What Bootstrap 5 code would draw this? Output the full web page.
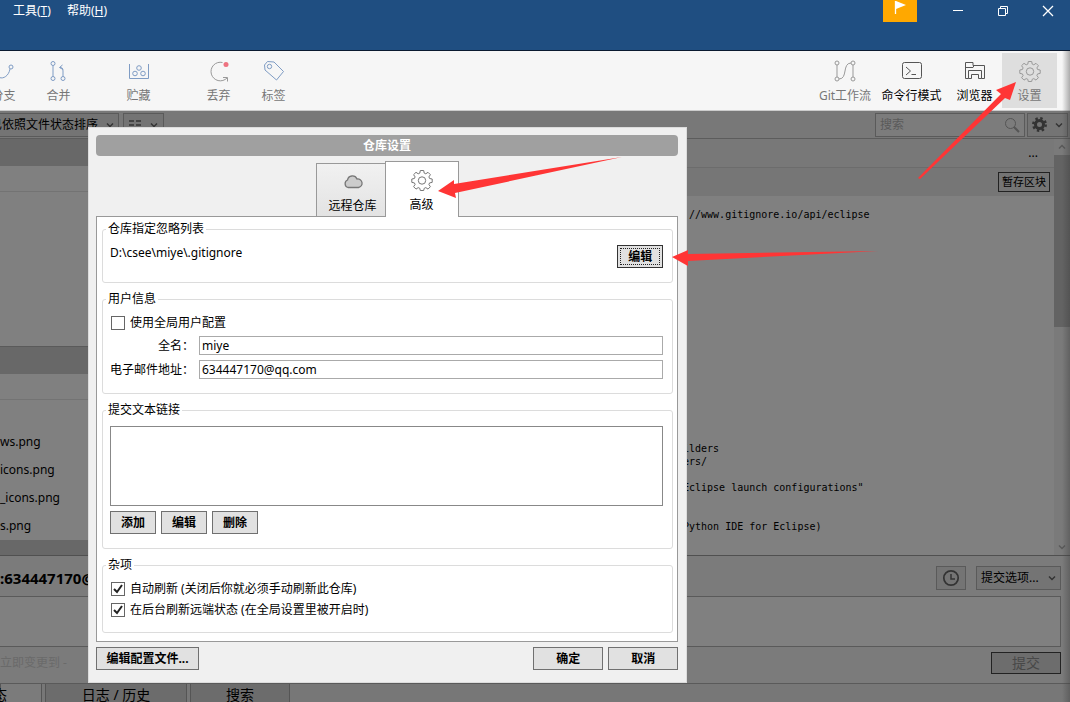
<!DOCTYPE html>
<html lang="zh-CN">
<head>
<meta charset="utf-8">
<meta name="viewport" content="width=device-width, initial-scale=1">
<title>仓库设置</title>
<link rel="stylesheet" href="https://cdn.jsdelivr.net/npm/bootstrap@5.3.0/dist/css/bootstrap.min.css">
<style>
  body { font: 12px/16px "Noto Sans", "Noto Sans CJK SC", sans-serif; color: #000; background: #7b7b7b; }
  svg { fill: none; stroke: currentColor; display: block; flex: none; }
  button, input, textarea { font: inherit; color: inherit; }
  .stage { min-height: 100vh; overflow: hidden; }
  .plain { background: none; border: 0; padding: 0; }

  .titlebar { background: #1f4e81; height: 51px; border-bottom: 1px solid #0a1a30; color: #fff; }
  .titlebar nav { padding: 3px 0 0 13px; gap: 16px; }
  .titlebar a { color: #fff; }
  .flag-btn { width: 34px; height: 22px; background: #ffa800; color: #fff; margin-right: 18px; }
  .win-btn { width: 45px; height: 22px; color: #fff; }

  .toolstrip { background: #f6f6f6; height: 60px; border-bottom: 1px solid #ccc; padding-top: 2px; color: #777; }
  .tools-left { margin-left: -24px; }
  .tools-right { margin-right: 13px; }
  .tool { width: 55px; height: 55px; padding-top: 7px; gap: 6px; color: #777; white-space: nowrap; }
  .tool svg { color: #7f9cc4; }
  .tool.grey svg, .tool.dark svg { color: #999; }
  .tool.dark { color: #000; }
  .tool.dark svg { color: #555; }
  .tool.wide { width: 71px; }
  .tool.mid { width: 62px; }
  .tool.pressed { background: #dedede; }
  .gap-group { margin-left: 25px; }

  .optbar { background: #787878; height: 28px; border-bottom: 1px solid #5c5c5c; padding-right: 2px; }
  .dim-btn { background: #747474; border: 1px solid #5a5a5a; padding: 0; height: 24px; color: #000; white-space: nowrap; overflow: hidden; }
  .dim-btn svg { color: #333; }
  .sort-btn { width: 119px; border-left: 0; }
  .view-btn { width: 41px; }
  .search-box { width: 150px; height: 24px; border: 1px solid #5a5a5a; background: #7c7c7c; color: #555; padding: 0 4px; margin-right: 2px; }
  .search-box input { background: none; border: 0; padding: 0; outline: 0; min-width: 0; }
  .search-box input::placeholder { color: #5a5a5a; opacity: 1; }

  .workarea { height: 416px; }
  .left-pane { width: 340px; background: #808080; }
  .band { background: #686868; height: 27px; }
  .subrow { height: 26px; border-bottom: 1px solid #737373; }
  .staged { height: 155px; border-bottom: 1px solid #5a5a5a; }
  .files li { height: 28px; line-height: 28px; }
  .right-pane { background: #808080; }
  .diff-head { height: 29px; background: #787878; border-bottom: 1px solid #6c6c6c; }
  .hunk-head { height: 28px; background: #767676; }
  .hunk-head .dim-btn { border-color: #222; width: 52px; height: 20px; font-size: 11px; }
  .code { font: 10px/13px "DejaVu Sans Mono", monospace; padding: 12px 0 0 343px; color: #000; overflow: hidden; }
  .vbar { width: 16px; background: #7a7a7a; color: #5a5a5a; }
  .thumb { height: 172px; background: #636363; }

  .commit-head { height: 41px; background: #7b7b7b; border-top: 1px solid #505050; padding: 4px 9px 0 0; gap: 10px; }
  .clock-btn { width: 30px; }
  .commit-opts { width: 85px; }
  .author { font-size: 15px; font-weight: 700; }
  .commit-msg { height: 51px; border: 1px solid #5a5a5a; border-left: 0; background: #808080; resize: none; width: calc(100% - 9px); padding: 2px; outline: 0; display: block; }
  .commit-foot { height: 37px; padding: 0 9px 4px 0; color: #6a6a6a; border-bottom: 1px solid #5a5a5a; }
  .commit-btn { width: 70px; height: 22px; border: 1px solid #222; background: #6d6d6d; color: #484848; font-size: 14px; padding: 0; }
  .bottom-tabs { height: 18px; overflow: hidden; font-size: 14px; line-height: 22px; background: #777; gap: 3px; }
  .bottom-tabs a { color: #000; height: 22px; white-space: nowrap; text-align: center; text-decoration: none; background: #6c6c6c; border: 1px solid #555; border-top: 0; }
  .bottom-tabs .tab-state { width: 42px; padding-right: 34px; background: #7b7b7b; }
  .tab-log { width: 142px; }
  .tab-find { width: 100px; }
  .edge { position: absolute; top: 51px; right: 0; bottom: 0; width: 8px; background: linear-gradient(90deg, rgba(60,60,60,0), rgba(60,60,60,.4)); }

  .settings { position: absolute; top: 127px; left: 88px; width: 56%; background: #f0f0f0; padding: 8px 9px 13px 8px; outline: 1px solid #dcdcdc; outline-offset: -1px; }
  .settings-title { background: #a0a0a0; color: #fff; font: inherit; font-weight: 700; height: 21px; line-height: 21px; border-radius: 4px; text-align: center; }
  .tabs { padding-top: 5px; margin-bottom: -1px; }
  .tabs button { border: 1px solid #999; border-bottom: 0; padding: 0; }
  .tabs .tab-remote { width: 69px; height: 54px; padding: 0 0 2px 4px; gap: 9px; background: linear-gradient(#f1f1f1, #e3e3e3); border-right: 0; border-bottom: 1px solid #999; }
  .tabs .tab-adv { width: 74px; height: 56px; padding-top: 7px; gap: 6px; background: #fff; }
  .tabs svg { color: #777; }
  .sheet { background: #fff; border: 1px solid #999; padding: 4px 4px 8px 5px; }
  fieldset { border: 1px solid #dcdcdc; border-radius: 3px; padding: 8px 9px 14px 7px; }
  legend { float: none; width: auto; font: inherit; line-height: 16px; margin: 0 0 0 -4px; padding: 0 2px; }
  .rows { display: flex; flex-direction: column; gap: 5px; }
  .btns { gap: 5px; }
  .foot-btns { padding-top: 5px; }
  .btn-os { background: #e1e1e1; border: 1px solid #707070; height: 23px; min-width: 46px; padding: 0 4px; font-weight: 700; color: #000; line-height: 20px; }
  .btn-os.focused { outline: 1px dotted #222; outline-offset: -4px; border-color: #333; }
  .btn-os.big { width: 70px; }
  .btn-os.file { width: 103px; }
  .text-os { border: 1px solid #aaa; background: #fff; height: 19px; padding: 0 2px; min-width: 0; outline: 0; }
  .field-label { width: 84px; margin-right: 5px; text-align: right; white-space: nowrap; }
  .links-box { display: block; width: 100%; height: 80px; border: 1px solid #888; resize: none; outline: 0; padding: 2px; }
  .tick { appearance: none; width: 14px; height: 14px; border: 1px solid #666; background: #fff; margin: 0 5px 0 1px; flex: none; }
  .tick:checked { background: #fff url("data:image/svg+xml,%3Csvg xmlns='http://www.w3.org/2000/svg' viewBox='0 0 12 12'%3E%3Cpath d='M2 6l3 3 5-7' fill='none' stroke='%23222' stroke-width='2'/%3E%3C/svg%3E"); }
  .arrow { position: absolute; fill: #ff3535; stroke: none; }
  .arrow-tab { left: 438px; top: 155px; }
  .arrow-edit { left: 672px; top: 246px; }
  .arrow-gear { left: 914px; top: 82px; }
</style>
</head>
<body>
<svg class="d-none" aria-hidden="true">
  <symbol id="gear" viewBox="0 0 22 22"><path d="M9.300 1.500h3.400l.5 2.600 1.600.7 2.200-1.500 2.400 2.400-1.500 2.200.7 1.600 2.600.5v3.400l-2.600.5-.7 1.600 1.500 2.200-2.400 2.400-2.200-1.500-1.600.7-.5 2.200H9.300l-.5-2.200-1.600-.7L5 20.100l-2.400-2.400 1.500-2.200-.7-1.600-2.600-.5V10l2.600-.5.7-1.600-1.500-2.200L5 3.300l2.200 1.500 1.600-.7z" stroke-linejoin="round"/><circle cx="11" cy="11.500" r="3.700"/></symbol>
  <symbol id="chev" viewBox="0 0 8 8"><path d="M1 2.500l3 3 3-3" stroke-width="1.400"/></symbol>
</svg>

<div class="stage position-relative d-flex flex-column">
  <header class="titlebar d-flex align-items-start">
    <nav class="d-flex">
      <a class="text-decoration-none" href="#">工具(<u>T</u>)</a>
      <a class="text-decoration-none" href="#">帮助(<u>H</u>)</a>
    </nav>
    <div class="d-flex ms-auto">
      <button class="flag-btn border-0 p-0 d-flex justify-content-center" aria-label="通知"><svg width="14" height="16"><path d="M2.500 1v13" stroke-width="1.300"/><path d="M3 1l10 4-10 4z" fill="currentColor" stroke="none"/></svg></button>
      <button class="plain win-btn d-flex align-items-center justify-content-center" aria-label="最小化"><svg width="12" height="12"><path d="M1 5.500h10"/></svg></button>
      <button class="plain win-btn d-flex align-items-center justify-content-center" aria-label="还原"><svg width="12" height="12"><path d="M1.500 3.500h7v7h-7zM3.500 3.500v-2h7v7h-2"/></svg></button>
      <button class="plain win-btn d-flex align-items-center justify-content-center" aria-label="关闭"><svg width="12" height="12"><path d="M1 1l10 10M11 1L1 11" stroke-width="1.300"/></svg></button>
    </div>
  </header>

  <div class="toolstrip d-flex">
    <div class="tools-left d-flex">
      <button class="plain tool d-flex flex-column align-items-center"><svg width="22" height="22"><path d="M3 4v7c0 10 12 9 14-2"/><circle cx="18" cy="7" r="2"/><circle cx="3" cy="3" r="2"/></svg>分支</button>
      <button class="plain tool d-flex flex-column align-items-center"><svg width="22" height="22"><circle cx="5" cy="3.500" r="2"/><circle cx="5" cy="18.500" r="2"/><circle cx="15" cy="18.500" r="2"/><path d="M5 5.500v11M15 16.500V11c0-3-1-3.500-3-3.500M14.500 5l-3 2.500 3.500 2"/></svg>合并</button>
      <button class="plain tool gap-group d-flex flex-column align-items-center"><svg width="22" height="22"><path d="M1.500 4v14.500h19V4"/><circle cx="11" cy="8" r="2.300"/><circle cx="7" cy="13.500" r="2.300"/><circle cx="15" cy="13.500" r="2.300"/></svg>贮藏</button>
      <button class="plain tool grey gap-group d-flex flex-column align-items-center"><svg width="22" height="22"><path d="M14.500 2.500A9.300 9.300 0 1 0 19 18M15 17.500h4.500v4"/><circle cx="18" cy="4.500" r="2.500" fill="#ee7280" stroke="none"/></svg>丢弃</button>
      <button class="plain tool d-flex flex-column align-items-center"><svg width="22" height="22"><path d="M1.500 5l3-3.500 6.500.5 9.500 9.500-7 8.500L2 10z" stroke-linejoin="round"/><circle cx="6.500" cy="6.500" r="2.200"/></svg>标签</button>
    </div>
    <div class="tools-right d-flex ms-auto">
      <button class="plain tool grey mid d-flex flex-column align-items-center"><svg width="22" height="22"><circle cx="3" cy="3" r="2"/><circle cx="3" cy="19" r="2"/><circle cx="19" cy="3" r="2"/><circle cx="19" cy="19" r="2"/><path d="M3 5v12M19 5v12M5 19c9 0 3-16 12-16"/></svg>Git工作流</button>
      <button class="plain tool dark wide d-flex flex-column align-items-center"><svg width="22" height="22"><rect x="1.500" y="2.500" width="19" height="16" rx="2"/><path d="M5 7l4.500 4L5 15M10.500 14.500H15"/></svg>命令行模式</button>
      <button class="plain tool dark d-flex flex-column align-items-center"><svg width="22" height="22"><path d="M4.500 18.500h-3v-16H9v3h11.500v13H17.500M1.500 7.500H9l1-2M4.500 18.500v-8h13v8h-3v-4h-7v4z"/></svg>浏览器</button>
      <button class="plain tool grey pressed d-flex flex-column align-items-center"><svg width="22" height="22"><use href="#gear"/></svg>设置</button>
    </div>
  </div>

  <div class="optbar d-flex align-items-center">
    <button class="dim-btn sort-btn d-flex align-items-center justify-content-end gap-2 pe-1">已依照文件状态排序 <svg width="8" height="8"><use href="#chev"/></svg></button>
    <button class="dim-btn view-btn d-flex align-items-center justify-content-around ms-1" aria-label="视图"><svg width="12" height="10"><path d="M0 1h5M7 1h5M0 5h5M7 5h5M0 9h5M7 9h5" stroke-width="1.500"/></svg><svg width="8" height="8"><use href="#chev"/></svg></button>
    <div class="search-box d-flex align-items-center ms-auto">
      <input class="flex-grow-1" type="search" placeholder="搜索" aria-label="搜索">
      <svg width="16" height="16"><circle cx="6.500" cy="6.500" r="5"/><path d="M10 10l5 5" stroke-width="2"/></svg>
    </div>
    <button class="dim-btn view-btn d-flex align-items-center justify-content-around" aria-label="选项"><svg width="15" height="15"><circle cx="7.500" cy="7.500" r="4" stroke-width="3"/><circle cx="7.500" cy="7.500" r="6.200" stroke-width="2.500" stroke-dasharray="2.400 2.470"/></svg><svg width="8" height="8"><use href="#chev"/></svg></button>
  </div>

  <div class="workarea d-flex">
    <aside class="left-pane flex-shrink-0">
      <div class="band"></div>
      <div class="subrow"></div>
      <div class="staged"></div>
      <div class="band"></div>
      <div class="subrow"></div>
      <ul class="files list-unstyled mb-0">
        <li></li><li>ws.png</li><li>icons.png</li><li>_icons.png</li><li>s.png</li>
      </ul>
      <div class="band"></div>
    </aside>
    <main class="right-pane flex-grow-1 d-flex">
      <div class="flex-grow-1">
        <div class="diff-head d-flex align-items-center justify-content-end pe-3">...</div>
        <div class="hunk-head d-flex align-items-center justify-content-end pe-1"><button class="dim-btn">暂存区块</button></div>
<pre class="code mb-0"> //www.gitignore.io/api/eclipse

















ilders
ers/

Eclipse launch configurations"


Python IDE for Eclipse)</pre>
      </div>
      <div class="vbar d-flex flex-column">
        <svg class="m-1" width="8" height="8"><path d="M1 5.500l3-3 3 3" stroke-width="1.500"/></svg>
        <div class="thumb"></div>
        <svg class="mx-1 mb-1 mt-auto" width="8" height="8"><use href="#chev"/></svg>
      </div>
    </main>
  </div>

  <div class="commit-head d-flex align-items-center">
    <span class="author">:634447170@</span>
    <button class="dim-btn clock-btn d-flex align-items-center justify-content-center ms-auto" aria-label="历史信息"><svg width="18" height="18"><circle cx="9" cy="9" r="7.200" stroke-width="1.700"/><path d="M9 5v5h4" stroke-width="1.500"/></svg></button>
    <button class="dim-btn commit-opts d-flex align-items-center justify-content-between px-1">提交选项... <svg width="8" height="8"><use href="#chev"/></svg></button>
  </div>
  <textarea class="commit-msg" aria-label="提交信息"></textarea>
  <div class="commit-foot d-flex align-items-center justify-content-between">
    <span>立即变更到 -</span>
    <button class="commit-btn">提交</button>
  </div>
  <nav class="bottom-tabs d-flex">
    <a class="tab-state d-flex justify-content-end" href="#">态</a>
    <a class="tab-log" href="#">日志 / 历史</a>
    <a class="tab-find" href="#">搜索</a>
  </nav>
  <div class="edge"></div>

  <section class="settings" role="dialog" aria-label="仓库设置">
    <h1 class="settings-title mb-0">仓库设置</h1>
    <div class="tabs d-flex justify-content-center align-items-end">
      <button class="tab-remote d-flex flex-column align-items-center justify-content-end"><svg width="20" height="16"><path d="M5 14.500a4 4 0 0 1-.5-7.500A5 5 0 0 1 14 6a4.300 4.300 0 0 1 1.500 8.500z" fill="#ccc" stroke-width="1.300"/></svg><span>远程仓库</span></button>
      <button class="tab-adv d-flex flex-column align-items-center"><svg width="22" height="22"><use href="#gear"/></svg>高级</button>
    </div>
    <div class="sheet d-flex flex-column gap-2">
      <fieldset>
        <legend>仓库指定忽略列表</legend>
        <div class="d-flex justify-content-between">
          <span>D:\csee\miye\.gitignore</span>
          <button class="btn-os focused">编辑</button>
        </div>
      </fieldset>
      <fieldset>
        <legend>用户信息</legend>
        <div class="rows">
          <div class="d-flex align-items-center"><input class="tick" type="checkbox" id="useGlobal"><label for="useGlobal">使用全局用户配置</label></div>
          <div class="d-flex align-items-center"><label class="field-label" for="fullName">全名：</label><input class="text-os flex-grow-1" id="fullName" type="text" value="miye"></div>
          <div class="d-flex align-items-center"><label class="field-label" for="email">电子邮件地址：</label><input class="text-os flex-grow-1" id="email" type="text" value="634447170@qq.com"></div>
        </div>
      </fieldset>
      <fieldset>
        <legend>提交文本链接</legend>
        <div class="rows">
          <textarea class="links-box" aria-label="提交文本链接"></textarea>
          <div class="d-flex btns"><button class="btn-os">添加</button><button class="btn-os">编辑</button><button class="btn-os">删除</button></div>
        </div>
      </fieldset>
      <fieldset>
        <legend>杂项</legend>
        <div class="rows">
          <div class="d-flex align-items-center"><input class="tick" type="checkbox" id="autoRefresh" checked><label for="autoRefresh">自动刷新 (关闭后你就必须手动刷新此仓库)</label></div>
          <div class="d-flex align-items-center"><input class="tick" type="checkbox" id="bgRefresh" checked><label for="bgRefresh">在后台刷新远端状态 (在全局设置里被开启时)</label></div>
        </div>
      </fieldset>
    </div>
    <div class="d-flex btns foot-btns">
      <button class="btn-os file me-auto">编辑配置文件...</button>
      <button class="btn-os big">确定</button>
      <button class="btn-os big">取消</button>
    </div>
  </section>

  <svg class="arrow arrow-tab" width="186" height="44"><path d="M0 36L16 25v4L184 2 17 38l1 5z"/></svg>
  <svg class="arrow arrow-edit" width="210" height="24"><path d="M0 11L16 4v4L206 5 16 15v5z"/></svg>
  <svg class="arrow arrow-gear" width="104" height="104"><path d="M102 0L96 18l-5-2L6 97l-2-1L87 12l-5-4z"/></svg>
</div>
<script src="https://cdn.jsdelivr.net/npm/bootstrap@5.3.0/dist/js/bootstrap.bundle.min.js"></script>
</body>
</html>
